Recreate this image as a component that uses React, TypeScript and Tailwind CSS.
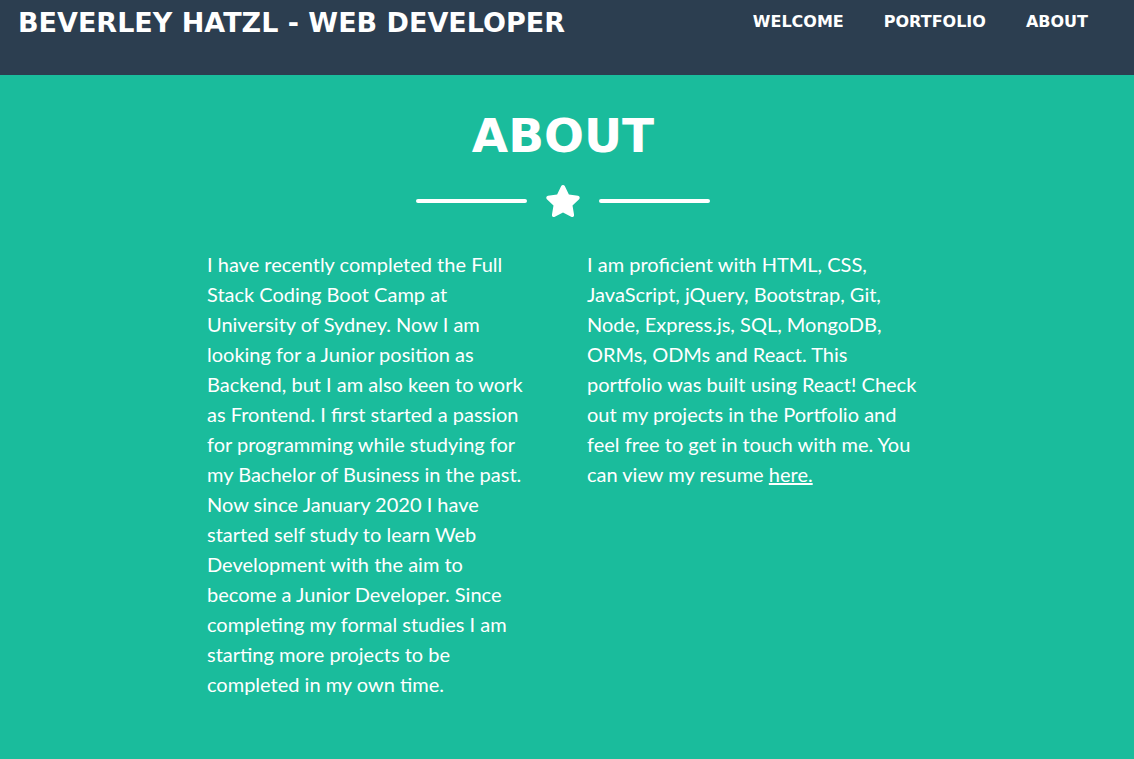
const leftLines = [
  "I have recently completed the Full",
  "Stack Coding Boot Camp at",
  "University of Sydney. Now I am",
  "looking for a Junior position as",
  "Backend, but I am also keen to work",
  "as Frontend. I first started a passion",
  "for programming while studying for",
  "my Bachelor of Business in the past.",
  "Now since January 2020 I have",
  "started self study to learn Web",
  "Development with the aim to",
  "become a Junior Developer. Since",
  "completing my formal studies I am",
  "starting more projects to be",
  "completed in my own time.",
];

const rightLines = [
  "I am proficient with HTML, CSS,",
  "JavaScript, jQuery, Bootstrap, Git,",
  "Node, Express.js, SQL, MongoDB,",
  "ORMs, ODMs and React. This",
  "portfolio was built using React! Check",
  "out my projects in the Portfolio and",
  "feel free to get in touch with me. You",
];

function Star() {
  return (
    <svg width="36" height="34" viewBox="0 0 576 512" className="fill-white">
      <path d="M259.3 17.8L194 150.2 47.9 171.5c-26.2 3.8-36.7 36.1-17.7 54.6l105.7 103-25 145.5c-4.5 26.3 23.2 46 46.4 33.7L288 439.6l130.7 68.7c23.2 12.2 50.9-7.4 46.4-33.7l-25-145.5 105.7-103c19-18.5 8.5-50.8-17.7-54.6L382 150.2 316.7 17.8c-11.7-23.6-45.6-23.9-57.4 0z" />
    </svg>
  );
}

export default function App() {
  return (
    <div className="min-h-[759px] bg-[#1abc9c] text-white">
      {/* Navbar */}
      <nav className="h-[75px] bg-[#2c3e50] flex items-start justify-between pl-[18px] pr-[46px] font-['DejaVu_Sans',sans-serif] font-bold">
        <div className="pt-[5px] text-[27px] leading-[36px]">
          BEVERLEY HATZL - WEB DEVELOPER
        </div>
        <ul className="flex gap-[40px] pt-[12px] text-[16px] leading-[20px]">
          <li>WELCOME</li>
          <li>PORTFOLIO</li>
          <li>ABOUT</li>
        </ul>
      </nav>

      {/* About heading */}
      <section className="flex flex-col items-center pt-[33px]">
        <h2 className="font-['DejaVu_Sans',sans-serif] font-bold text-[47px] leading-[56px] pr-[8px]">
          ABOUT
        </h2>
        <div className="flex items-center gap-[18px] mt-[20px] pr-[8px]">
          <div className="w-[111px] h-[4px] bg-white rounded-full" />
          <Star />
          <div className="w-[111px] h-[4px] bg-white rounded-full" />
        </div>
      </section>

      <div className="flex gap-[30px] pl-[207px] pt-[31px] pb-[40px] font-['Lato',sans-serif] text-[20px] leading-[30px]">
        <p className="w-[350px]">
          {leftLines.map((l) => (
            <span key={l} className="block whitespace-nowrap">
              {l}
            </span>
          ))}
        </p>
        <p className="w-[350px]">
          {rightLines.map((l) => (
            <span key={l} className="block whitespace-nowrap">
              {l}
            </span>
          ))}
          <span className="block whitespace-nowrap">
            can view my resume <a className="underline">here.</a>
          </span>
        </p>
      </div>
    </div>
  );
}
